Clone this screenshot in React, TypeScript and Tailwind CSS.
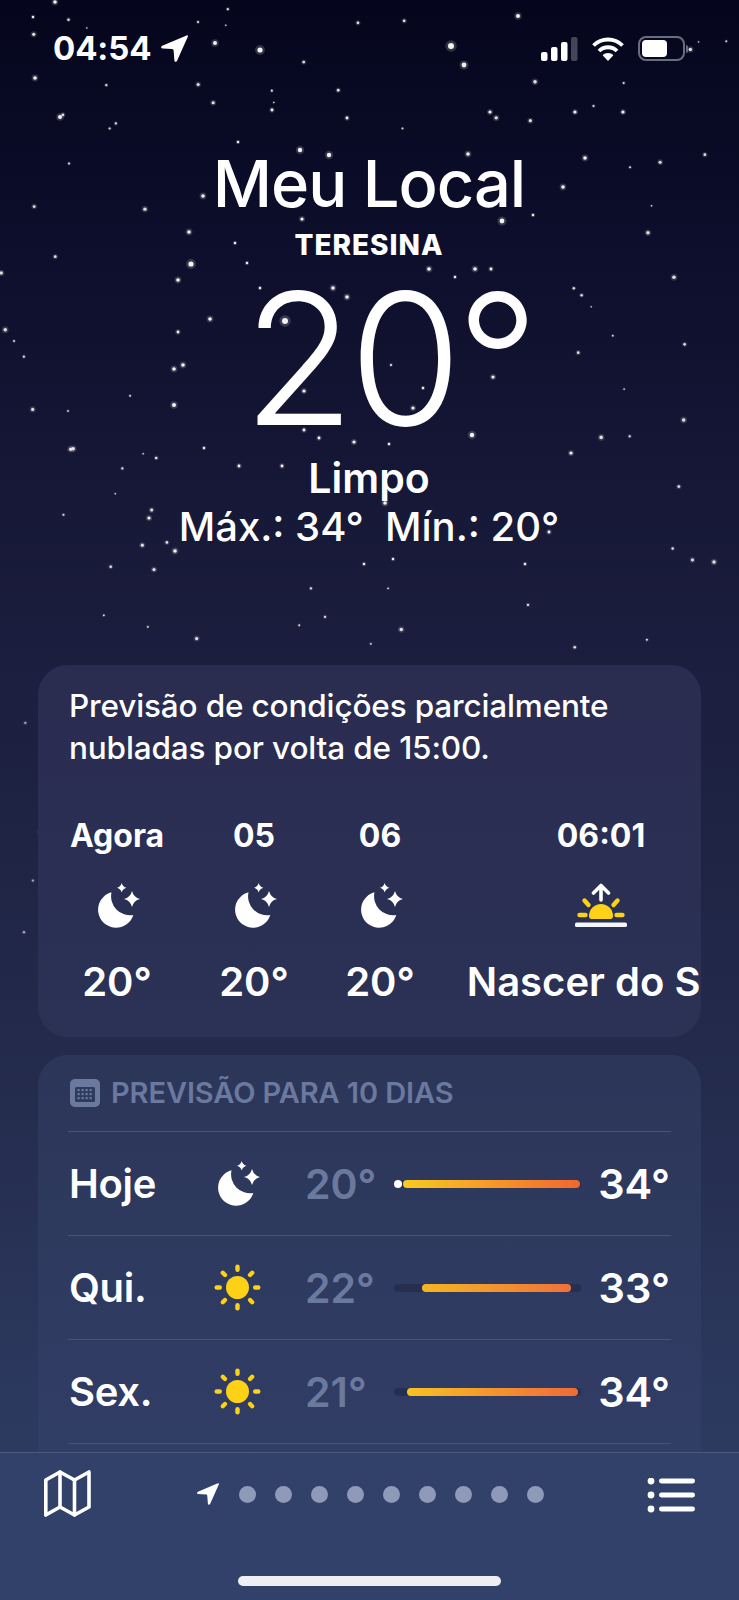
import React from "react";

const font = { fontFamily: "Inter, 'Liberation Sans', sans-serif" };

const handStars: [number, number, number][] = [
  [260, 50, 2.6], [451, 46, 3], [464, 65, 2.4], [518, 16, 2], [215, 43, 2], [55, 2, 1.8], [33, 17, 1.2], [198, 22, 1], [35, 78, 1.8], [60, 117, 2],
  [272, 110, 1.4], [347, 118, 1.4], [490, 112, 1.6], [575, 112, 1.6], [623, 112, 1.6],
  [300, 150, 2.2], [329, 155, 2.2], [468, 154, 1.8], [585, 158, 1.8], [563, 187, 1.8], [203, 196, 1.8], [238, 142, 1.2], [302, 219, 1.6], [502, 221, 2.4], [533, 215, 1.2],
  [189, 232, 1.8], [235, 243, 1.2], [247, 263, 1.2], [491, 269, 1.4], [429, 269, 1.8], [475, 269, 1.8], [455, 277, 1.2],
  [191, 264, 2.6], [178, 280, 1.8], [260, 288, 1.2], [333, 288, 1.8], [347, 297, 1.8], [210, 319, 1.8], [285, 321, 3], [178, 332, 1.4],
  [174, 369, 1.8], [183, 365, 1.8], [174, 405, 2], [493, 377, 1.6], [391, 365, 1], [423, 388, 1.2], [304, 391, 1.6], [413, 408, 1.6], [472, 435, 2.2],
  [204, 448, 1.2], [304, 430, 1.4], [319, 438, 1.4], [354, 442, 1.6], [389, 444, 1.2], [571, 453, 1.6], [239, 466, 1.4], [282, 466, 1.4],
  [149, 518, 1.6], [175, 551, 1.8], [385, 503, 1.8], [549, 532, 1.4], [364, 564, 1.2], [393, 559, 1.2], [525, 564, 1.2],
];

function makeStars() {
  const out: [number, number, number, number][] = handStars.map(([x, y, r]) => [x, y, r, 1]);
  let s = 73129;
  const rnd = () => {
    s = (s * 16807) % 2147483647;
    return s / 2147483647;
  };
  for (let i = 0; i < 200; i++) {
    const x = rnd() * 739;
    const y = rnd() * 1000;
    const r = 0.7 + rnd() * 1.1;
    if (x > 170 && x < 570 && y > 130 && y < 580) continue;
    const o = y < 650 ? 0.9 : 0.6;
    out.push([x, y, r, o]);
  }
  return out;
}
const stars = makeStars();

function StarField() {
  return (
    <svg className="absolute left-0 top-0" width="739" height="1600" viewBox="0 0 739 1600">
      {stars.map(([x, y, r, o], i) => (
        <g key={i}>
          <circle cx={x} cy={y} r={r * 1.9} fill="#f4f2ee" opacity={o * 0.18} />
          <circle cx={x} cy={y} r={r} fill="#f4f2ee" opacity={o} />
        </g>
      ))}
    </svg>
  );
}

function Arrow({ className }: { className: string }) {
  return (
    <svg className={className} viewBox="0 0 27 27" fill="white">
      <path d="M25.6 .4 C26.6 -.1 27.2 .6 26.9 1.6 L16.2 25.4 C15.4 27.2 13.6 27.2 13.4 25.4 L12.6 15.6 C12.5 14.6 12 14.2 11.2 14.1 L1.6 13.4 C-.2 13.2 -.4 11.5 1.2 10.7 Z" />
    </svg>
  );
}

function Star({ cx, cy, r }: { cx: number; cy: number; r: number }) {
  const k = r * 0.2;
  return (
    <path
      d={`M${cx} ${cy - r} Q${cx + k} ${cy - k} ${cx + r} ${cy} Q${cx + k} ${cy + k} ${cx} ${cy + r} Q${cx - k} ${cy + k} ${cx - r} ${cy} Q${cx - k} ${cy - k} ${cx} ${cy - r}Z`}
    />
  );
}

function Moon() {
  return (
    <svg className="ml-[4px]" width="44" height="46" viewBox="0 0 44 46" fill="white">
      <path d="M14.5 9.3 A18 18 0 1 0 36.3 32 A19 19 0 0 1 14.5 9.3Z" />
      <Star cx={35} cy={16} r={8} />
      <Star cx={24.7} cy={4.8} r={4.8} />
    </svg>
  );
}

function Sun() {
  const rays = [0, 45, 90, 135, 180, 225, 270, 315];
  return (
    <svg width="47" height="47" viewBox="0 0 47 47">
      <circle cx="23.5" cy="23.5" r="11.5" fill="#fcd116" />
      {rays.map((a) => (
        <line
          key={a}
          x1="23.5"
          y1="2.7"
          x2="23.5"
          y2="5.8"
          stroke="#fcd116"
          strokeWidth="4.4"
          strokeLinecap="round"
          transform={`rotate(${a} 23.5 23.5)`}
        />
      ))}
    </svg>
  );
}

function Sunrise() {
  return (
    <svg width="54" height="46" viewBox="0 0 54 46">
      <path d="M15 33 A12 12 0 0 1 39 33 C39 35 38 36 36.5 36 H17.5 C16 36 15 35 15 33 Z" fill="#fcd116" />
      <g stroke="#fcd116" strokeWidth="4.4" strokeLinecap="round">
        <line x1="5.5" y1="32" x2="11.5" y2="32" />
        <line x1="42.5" y1="32" x2="48.5" y2="32" />
        <line x1="10.5" y1="17.5" x2="14.5" y2="22" />
        <line x1="43.5" y1="17.5" x2="39.5" y2="22" />
      </g>
      <rect x="1" y="39.5" width="52" height="4.6" rx="1.6" fill="#f4f6fa" />
      <path d="M27 17 V3.5 M19.5 10 L27 2.5 L34.5 10" stroke="white" strokeWidth="3.6" fill="none" strokeLinecap="round" strokeLinejoin="round" />
    </svg>
  );
}

function StatusBar() {
  return (
    <div className="flex h-[37px] items-center justify-between pl-[53px] pr-[51px] mt-[30px] text-white">
      <div className="flex items-center gap-[9px]">
        <span className="text-[33px] leading-[37px] font-bold tracking-[-0.1px]">04:54</span>
        <Arrow className="w-[27px] h-[27px]" />
      </div>
      <div className="flex items-center gap-[14px]">
        <svg width="37" height="24" viewBox="0 0 37 24" fill="white">
          <rect x="0" y="15" width="6.5" height="9" rx="2" />
          <rect x="10" y="10" width="6.5" height="14" rx="2" />
          <rect x="20" y="5" width="6.5" height="19" rx="2" />
          <rect x="30" y="0" width="6.5" height="24" rx="2" opacity="0.25" />
        </svg>
        <svg width="32" height="24" viewBox="0 0 32 24" fill="none" stroke="white" strokeWidth="3.8">
          <path d="M1.5 8.5 C9.5 .5 22.5 .5 30.5 8.5" />
          <path d="M7 14 C12 9 20 9 25 14" />
          <path d="M16 24 L10.6 18.2 C13.5 15.4 18.5 15.4 21.4 18.2 Z" fill="white" stroke="none" />
        </svg>
        <div className="flex items-center gap-[1px]">
          <div className="w-[47px] h-[25px] rounded-[8px] border-2 border-[#6a6c80] p-[2px]">
            <div className="w-[25px] h-full rounded-[4px] bg-white" />
          </div>
          <div className="w-[2px] h-[8px] rounded-r-full bg-[#6a6c80]" />
        </div>
      </div>
    </div>
  );
}

function Hero() {
  return (
    <div className="flex flex-col items-center text-white mt-[78px] ml-[-1px]">
      <div className="text-[65px] leading-[78px] font-[550] tracking-[-1px]">Meu Local</div>
      <div className="text-[28px] leading-[32px] font-extrabold tracking-[1px] mt-[6px]">TERESINA</div>
      <div className="text-[183px] leading-[190px] font-light tracking-[-6px] mt-[3px] pl-[38px]">20°</div>
      <div className="text-[41px] leading-[46px] font-semibold mt-[1px]">Limpo</div>
      <div className="text-[40px] leading-[50px] font-[550] whitespace-pre mt-[1px]">Máx.: 34°  Mín.: 20°</div>
    </div>
  );
}

const hours = [
  { label: "Agora", icon: <Moon />, val: "20°", w: "w-[94px]" },
  { label: "05", icon: <Moon />, val: "20°", w: "w-[72px]" },
  { label: "06", icon: <Moon />, val: "20°", w: "w-[72px]" },
  { label: "06:01", icon: <Sunrise />, val: "Nascer do Sol", w: "w-[262px]" },
];

function HourlyCard() {
  return (
    <div className="ml-[38px] mt-[113px] h-[372px] w-[663px] rounded-[30px] overflow-hidden bg-[linear-gradient(180deg,#2a2c50_0%,#2a3256_100%)] pt-[20px] pl-[31px] text-white">
      <div className="text-[31.5px] leading-[42px] font-medium tracking-[-0.15px] whitespace-nowrap">
        <div>Previsão de condições parcialmente</div>
        <div>nubladas por volta de 15:00.</div>
      </div>
      <div className="flex gap-[54px] mt-[48px] ml-[1px]">
        {hours.map((h) => (
          <div key={h.label} className={`flex flex-col items-center shrink-0 ${h.w}`}>
            <div className="text-[32px] leading-[38px] font-bold whitespace-nowrap">{h.label}</div>
            <div className="h-[46px] mt-[28px] flex items-center justify-center">{h.icon}</div>
            <div className="text-[40px] leading-[46px] font-semibold whitespace-nowrap mt-[30px]">{h.val}</div>
          </div>
        ))}
      </div>
    </div>
  );
}

function Calendar() {
  return (
    <svg width="30" height="28" viewBox="0 0 30 28">
      <rect x="0" y="0" width="30" height="28" rx="5" fill="#6b799f" />
      <rect x="5" y="8" width="20" height="15" rx="1.5" fill="#2e3a5e" />
      <g fill="#6b799f">
        {[0, 1, 2, 3].map((c) =>
          [0, 1, 2].map((r) => <rect key={`${c}${r}`} x={7.5 + c * 4} y={10 + r * 4} width="2.2" height="2.2" />)
        )}
      </g>
    </svg>
  );
}

const days = [
  { d: "Hoje", icon: <Moon />, lo: "20°", hi: "34°", ml: 9, w: 177, dot: true, from: "#f9cb1f", to: "#f2662f" },
  { d: "Qui.", icon: <Sun />, lo: "22°", hi: "33°", ml: 28, w: 149, dot: false, from: "#f5b623", to: "#f0713a" },
  { d: "Sex.", icon: <Sun />, lo: "21°", hi: "34°", ml: 13, w: 171, dot: false, from: "#f8c220", to: "#f0693a" },
];

function DailyCard() {
  return (
    <div className="ml-[38px] mt-[18px] w-[663px] h-[500px] rounded-t-[30px] bg-[linear-gradient(180deg,#2c3659_0%,#323f68_100%)] pt-[24px] px-[30px] text-white">
      <div className="flex items-center gap-[11px] h-[28px] pl-[2px]">
        <Calendar />
        <span className="text-[29px] leading-[32px] font-semibold text-[#6b799f] tracking-[-0.1px] whitespace-nowrap">PREVISÃO PARA 10 DIAS</span>
      </div>
      <div className="mt-[24px]">
        {days.map((r) => (
          <div key={r.d} className="h-[104px] border-t border-[#47547a] flex items-center">
            <div className="w-[130px] pl-[1px] text-[40px] font-semibold leading-[48px] tracking-[-0.3px]">{r.d}</div>
            <div className="w-[80px] flex justify-center pr-[2px]">{r.icon}</div>
            <div className="w-[116px] text-[41px] leading-[48px] font-semibold text-[#6b799f] pl-[27px] whitespace-nowrap">{r.lo}</div>
            <div className="relative w-[187px] h-[8px] rounded-full bg-[#262f50]">
              {r.dot && <div className="absolute left-0 top-0 w-[8px] h-[8px] rounded-full bg-white" />}
              <div
                className="absolute top-0 h-[8px] rounded-full"
                style={{ left: r.ml, width: r.w, background: `linear-gradient(90deg, ${r.from}, ${r.to})` }}
              />
            </div>
            <div className="ml-auto pr-[1px] text-[41.5px] leading-[48px] font-semibold">{r.hi}</div>
          </div>
        ))}
        <div className="border-t border-[#47547a]" />
      </div>
    </div>
  );
}

function BottomBar() {
  return (
    <div className="relative h-[148px] border-t border-[#4c5a82] bg-[#31416a] shrink-0">
      <div className="flex items-center justify-between h-[84px] pl-[44px] pr-[44px]">
        <svg className="mb-[4px]" width="47" height="47" viewBox="0 0 47 47" fill="none" stroke="white" strokeWidth="3.6" strokeLinejoin="round" strokeLinecap="round">
          <path d="M1.8 10 L16 2 L30.5 10 L45 2 V37 L30.5 45 L16 37 L1.8 45 Z" />
          <path d="M16 2 V37 M30.5 10 V45" />
        </svg>
        <div className="flex items-center gap-[19px] mb-[2px] ml-[2px]">
          <Arrow className="w-[22px] h-[22px] mr-[1px]" />
          {[0, 1, 2, 3, 4, 5, 6, 7, 8].map((i) => (
            <div key={i} className="w-[17px] h-[17px] rounded-full bg-[#8e9ab8]" />
          ))}
        </div>
        <svg className="mt-[2px]" width="48" height="36" viewBox="0 0 48 36" fill="white">
          {[3, 17, 31].map((y) => (
            <g key={y}>
              <circle cx="4" cy={y} r="3.4" />
              <rect x="12" y={y - 2.4} width="36" height="4.8" rx="2.4" />
            </g>
          ))}
        </svg>
      </div>
      <div className="flex justify-center mt-[39px]">
        <div className="w-[263px] h-[10px] rounded-full bg-[#eeeff2]" />
      </div>
    </div>
  );
}

export default function App() {
  return (
    <div
      style={font}
      className="relative w-[739px] h-[1600px] overflow-hidden flex flex-col bg-[linear-gradient(180deg,#05051d_0%,#0d0e2b_15%,#1a1c3c_38%,#232a4b_65%,#2d3a60_90%,#30406a_100%)]"
    >
      <StarField />
      <div className="relative flex-1 min-h-0 overflow-hidden">
        <StatusBar />
        <Hero />
        <HourlyCard />
        <DailyCard />
      </div>
      <BottomBar />
    </div>
  );
}
